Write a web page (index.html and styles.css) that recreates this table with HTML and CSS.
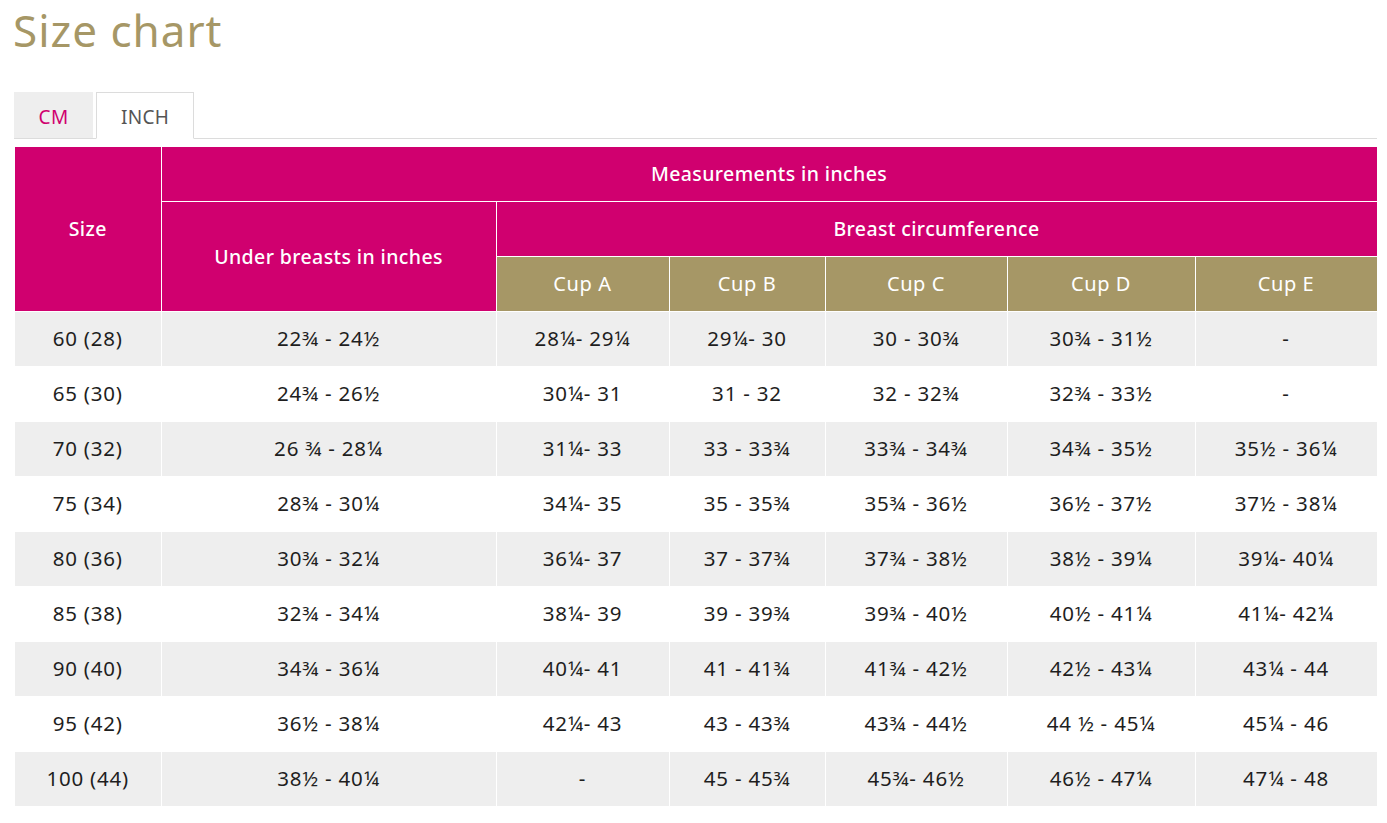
FILE: index.html
```html
<!DOCTYPE html>
<html lang="en">
<head>
<meta charset="utf-8">
<title>Size chart</title>
<link rel="stylesheet" href="styles.css">
</head>
<body>
<div class="page">
  <h1 class="title">Size chart</h1>
  <div class="tabs">
    <div class="tab tab-cm">CM</div>
    <div class="tab tab-active">INCH</div>
  </div>
  <table class="chart">
    <colgroup>
      <col class="c-size"><col class="c-under"><col class="c-a"><col class="c-b"><col class="c-c"><col class="c-d"><col class="c-e">
    </colgroup>
    <thead>
      <tr>
        <th rowspan="3">Size</th>
        <th colspan="6">Measurements in inches</th>
      </tr>
      <tr>
        <th rowspan="2" class="under">Under breasts in inches</th>
        <th colspan="5">Breast circumference</th>
      </tr>
      <tr class="cups">
        <th>Cup A</th><th>Cup B</th><th>Cup C</th><th>Cup D</th><th>Cup E</th>
      </tr>
    </thead>
    <tbody>
      <tr><td>60 (28)</td><td>22¾ - 24½</td><td>28¼- 29¼</td><td>29¼- 30</td><td>30 - 30¾</td><td>30¾ - 31½</td><td>-</td></tr>
      <tr><td>65 (30)</td><td>24¾ - 26½</td><td>30¼- 31</td><td>31 - 32</td><td>32 - 32¾</td><td>32¾ - 33½</td><td>-</td></tr>
      <tr><td>70 (32)</td><td>26 ¾ - 28¼</td><td>31¼- 33</td><td>33 - 33¾</td><td>33¾ - 34¾</td><td>34¾ - 35½</td><td>35½ - 36¼</td></tr>
      <tr><td>75 (34)</td><td>28¾ - 30¼</td><td>34¼- 35</td><td>35 - 35¾</td><td>35¾ - 36½</td><td>36½ - 37½</td><td>37½ - 38¼</td></tr>
      <tr><td>80 (36)</td><td>30¾ - 32¼</td><td>36¼- 37</td><td>37 - 37¾</td><td>37¾ - 38½</td><td>38½ - 39¼</td><td>39¼- 40¼</td></tr>
      <tr><td>85 (38)</td><td>32¾ - 34¼</td><td>38¼- 39</td><td>39 - 39¾</td><td>39¾ - 40½</td><td>40½ - 41¼</td><td>41¼- 42¼</td></tr>
      <tr><td>90 (40)</td><td>34¾ - 36¼</td><td>40¼- 41</td><td>41 - 41¾</td><td>41¾ - 42½</td><td>42½ - 43¼</td><td>43¼ - 44</td></tr>
      <tr><td>95 (42)</td><td>36½ - 38¼</td><td>42¼- 43</td><td>43 - 43¾</td><td>43¾ - 44½</td><td>44 ½ - 45¼</td><td>45¼ - 46</td></tr>
      <tr><td>100 (44)</td><td>38½ - 40¼</td><td>-</td><td>45 - 45¾</td><td>45¾- 46½</td><td>46½ - 47¼</td><td>47¼ - 48</td></tr>
    </tbody>
  </table>
</div>
</body>
</html>
```

FILE: styles.css
```css
* { box-sizing: border-box; }
html, body { margin: 0; padding: 0; background: #fff; }
body {
  font-family: "Noto Sans", "Open Sans", sans-serif;
  color: #222;
}
.page {
  padding: 0 10px 0 15px;
  width: 1387px;
}
.title {
  margin: 0;
  padding-top: 3px;
  margin-left: -2px;
  font-weight: 400;
  font-size: 44px;
  line-height: 54px;
  letter-spacing: 1px;
  color: #a69766;
  height: 92px;
}
.tabs {
  display: flex;
  gap: 3px;
  height: 47px;
  border-bottom: 1px solid #dcdcdc;
  margin-left: -1px;
}
.tab {
  height: 46px;
  font-size: 19px;
  line-height: 50px;
  text-align: center;
  letter-spacing: 0.3px;
}
.tab-cm {
  width: 79px;
  background: #eee;
  color: #d0006f;
}
.tab-active {
  width: 98px;
  height: 47px;
  background: #fff;
  color: #555;
  border: 1px solid #dcdcdc;
  border-bottom: 1px solid #fff;
  line-height: 48px;
}
.chart {
  margin-top: 8px;
  width: 1362px;
  border-collapse: collapse;
  table-layout: fixed;
}
.c-size { width: 146px; }
.c-under { width: 335px; }
.c-a { width: 173px; }
.c-b { width: 156px; }
.c-c { width: 182px; }
.c-d { width: 188px; }
.c-e { width: 182px; }
.chart th, .chart td {
  border: 1px solid #fff;
  text-align: center;
  padding: 0;
  height: 55px;
}
.chart tr:first-child th { border-top: 0; height: 54px; }
.chart th:first-child, .chart td:first-child { border-left: 0; }
.chart th {
  background: #d0006f;
  color: #fff;
  font-weight: 500;
  font-size: 19.5px;
  letter-spacing: 0.4px;
}
.chart .cups th {
  background: #a69766;
  font-weight: 400;
  font-size: 20px;
  letter-spacing: 0.6px;
}
.chart td {
  font-size: 20.5px;
  letter-spacing: 0.8px;
  color: #1e1e1e;
  padding-bottom: 2px;
}
.chart tbody tr:nth-child(odd) td { background: #eee; }
.chart tbody tr:nth-child(even) td { background: #fff; }
```
